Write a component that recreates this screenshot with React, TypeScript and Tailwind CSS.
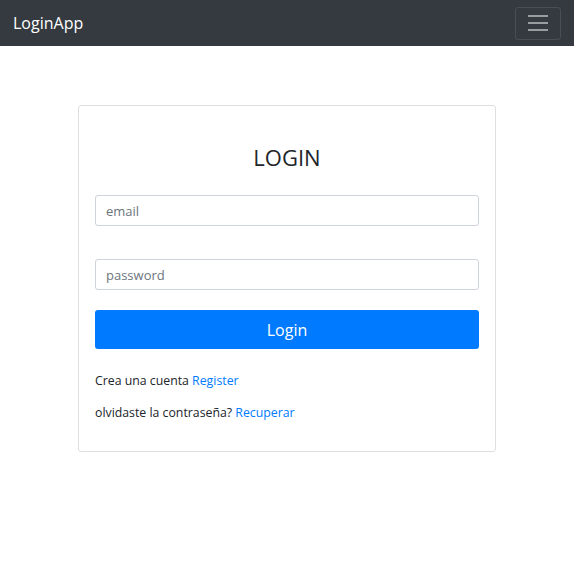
export default function App() {
  return (
    <div className="min-h-[574px] bg-white font-['Open_Sans',sans-serif] text-[#212529]">
      <nav className="flex h-[46px] items-center justify-between bg-[#343a40] pl-[13px] pr-[13px]">
        <a className="text-[16px] text-white">LoginApp</a>
        <button className="flex h-[33px] w-[46px] flex-col items-center justify-center gap-[5px] rounded-[3px] border border-white/10">
          <span className="block h-[2px] w-[20px] bg-white/50"></span>
          <span className="block h-[2px] w-[20px] bg-white/50"></span>
          <span className="block h-[2px] w-[20px] bg-white/50"></span>
        </button>
      </nav>

      <div className="mx-auto mt-[59px] w-[418px] rounded-[3px] border border-[#dfdfdf] px-[16px] pb-[28px] pt-[37px]">
        <h3 className="text-center text-[22px] font-medium leading-[28px]">LOGIN</h3>
        <form className="mt-[24px] flex flex-col">
          <input
            type="email"
            placeholder="email"
            className="h-[31px] w-full rounded-[3px] border border-[#ced4da] px-[10px] text-[13px] text-[#495057] placeholder:text-[#6c757d] outline-none"
          />
          <input
            type="password"
            placeholder="password"
            className="mt-[33px] h-[31px] w-full rounded-[3px] border border-[#ced4da] px-[10px] text-[13px] text-[#495057] placeholder:text-[#6c757d] outline-none"
          />
          <button
            type="button"
            className="mt-[20px] h-[39px] w-full rounded-[3px] bg-[#007bff] text-[16px] text-white"
          >
            Login
          </button>
        </form>
        <p className="mt-[22px] text-[12.3px] leading-[20px]">
          Crea una cuenta <a className="text-[#007bff]">Register</a>
        </p>
        <p className="mt-[12px] text-[12.3px] leading-[20px]">
          olvidaste la contraseña? <a className="text-[#007bff]">Recuperar</a>
        </p>
      </div>
    </div>
  );
}
